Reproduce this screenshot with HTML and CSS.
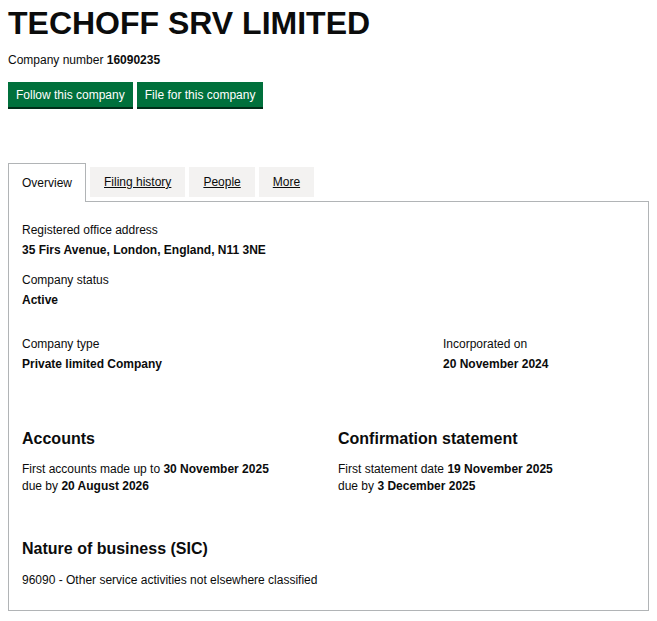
FILE: index.html
```html
<!doctype html>
<html>
<head>
<meta charset="utf-8">
<title>TECHOFF SRV LIMITED - Overview</title>
<link rel="stylesheet" href="styles.css">
</head>
<body>
<div class="page">
  <h1 class="company-name">TECHOFF SRV LIMITED</h1>
  <p class="company-number">Company number <strong>16090235</strong></p>
  <div class="actions">
    <a class="button" href="#">Follow this company</a>
    <a class="button" href="#">File for this company</a>
  </div>

  <ul class="tabs">
    <li class="tab tab-selected"><a href="#">Overview</a></li>
    <li class="tab"><a href="#">Filing history</a></li>
    <li class="tab"><a href="#">People</a></li>
    <li class="tab"><a href="#">More</a></li>
  </ul>

  <div class="panel">
    <dl class="field">
      <dt>Registered office address</dt>
      <dd>35 Firs Avenue, London, England, N11 3NE</dd>
    </dl>
    <dl class="field field-status">
      <dt>Company status</dt>
      <dd>Active</dd>
    </dl>

    <div class="row row-type">
      <dl class="field">
        <dt>Company type</dt>
        <dd>Private limited Company</dd>
      </dl>
      <dl class="field">
        <dt>Incorporated on</dt>
        <dd>20 November 2024</dd>
      </dl>
    </div>

    <div class="row row-dates">
      <div class="column">
        <h2 class="heading">Accounts</h2>
        <p class="text">First accounts made up to <strong>30 November 2025</strong><br>
          due by <strong>20 August 2026</strong></p>
      </div>
      <div class="column">
        <h2 class="heading">Confirmation statement</h2>
        <p class="text">First statement date <strong>19 November 2025</strong><br>
          due by <strong>3 December 2025</strong></p>
      </div>
    </div>

    <h2 class="heading sic-heading">Nature of business (SIC)</h2>
    <ul class="sic">
      <li>96090 - Other service activities not elsewhere classified</li>
    </ul>
  </div>
</div>
</body>
</html>
```

FILE: styles.css
```css
html, body, h1, h2, p, ul, li, dl, dt, dd {
  margin: 0;
  padding: 0;
}

body {
  background: #fff;
  color: #0b0c0c;
  font-family: "Liberation Sans", Arial, sans-serif;
  font-size: 12px;
  line-height: 16px;
}

.page {
  padding: 3px 8px 0;
}

.company-name {
  font-size: 32px;
  line-height: 40px;
  font-weight: bold;
}

.company-number {
  margin-top: 9px;
}

.actions {
  display: flex;
  gap: 4px;
  margin-top: 14px;
}

.button {
  display: block;
  padding: 5px 8px 4px;
  background: #00703c;
  color: #fff;
  text-decoration: none;
  box-shadow: 0 2px 0 #002d18;
}

/* tabs */
.tabs {
  display: flex;
  align-items: flex-end;
  gap: 4px;
  list-style: none;
  margin-top: 56px;
  position: relative;
  z-index: 1;
}

.tab {
  background: #f3f2f1;
  margin-bottom: 4px;
}

.tab a {
  display: block;
  padding: 7px 14px 7px;
  color: #0b0c0c;
}

.tab-selected {
  background: #fff;
  border: 1px solid #b1b4b6;
  border-bottom: 0;
  margin-bottom: -1px;
}

.tab-selected a {
  padding: 11px 13px 11px;
  text-decoration: none;
}

.panel {
  border: 1px solid #b1b4b6;
  padding: 20px 13px 22px;
}

.field dd {
  margin-top: 4px;
  font-weight: bold;
}

.field-status {
  margin-top: 14px;
}

.row {
  display: grid;
}

.row-type {
  grid-template-columns: 421px 1fr;
  margin-top: 28px;
}

.row-dates {
  grid-template-columns: 316px 1fr;
  margin-top: 57px;
}

.heading {
  font-size: 16px;
  line-height: 20px;
  font-weight: bold;
}

.text {
  margin-top: 12px;
  line-height: 17px;
}

.sic-heading {
  margin-top: 44px;
}

.sic {
  list-style: none;
  margin-top: 13px;
}
```
